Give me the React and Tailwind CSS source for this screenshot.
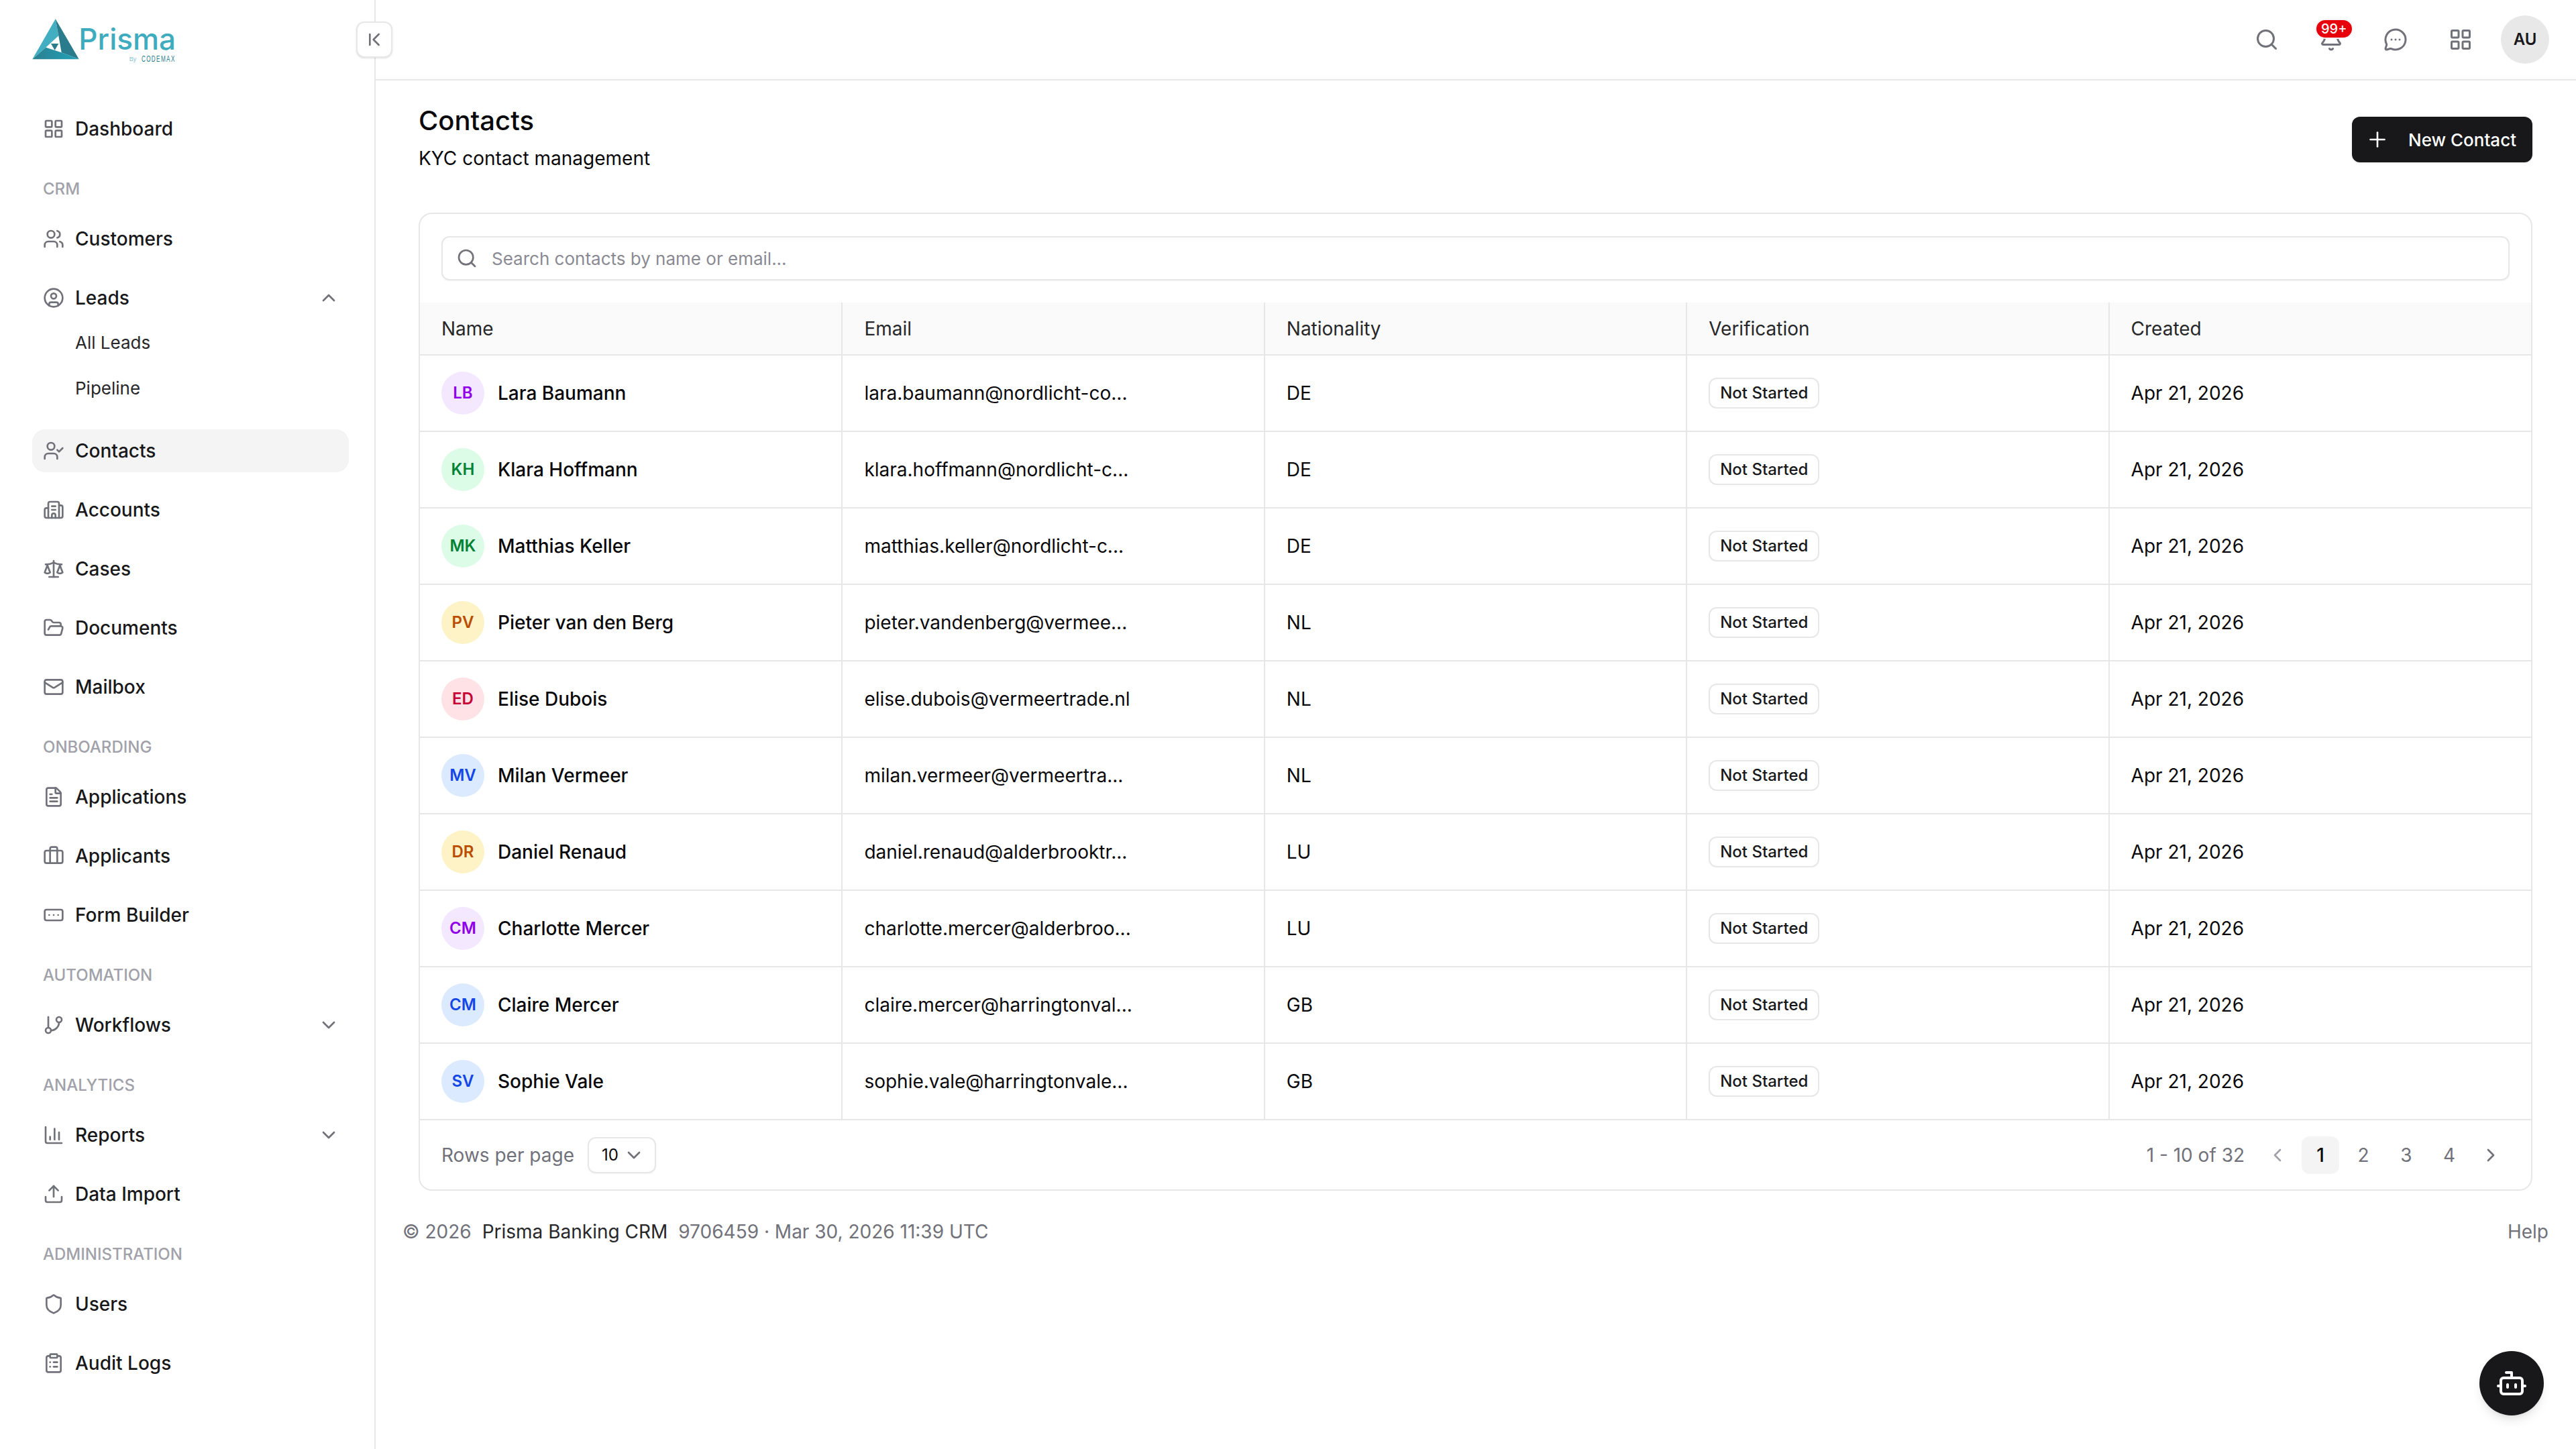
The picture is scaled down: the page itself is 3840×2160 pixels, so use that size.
import {
  Bell, Bot, Briefcase, Building2, ChartColumn, ChevronDown, ChevronFirst, ChevronLeft, ChevronRight, ChevronUp,
  CircleUser, ClipboardList, FileText, FolderOpen, GitBranch, LayoutGrid, Mail, MessageCircleMore, Plus,
  RectangleEllipsis, Scale, Search, Shield, Upload, UserCheck, Users,
} from 'lucide-react';

const contacts = [
  { initials: 'LB', name: 'Lara Baumann', email: 'lara.baumann@nordlicht-co...', nat: 'DE', tone: 'bg-[#f3e8ff] text-[#9000e8]' },
  { initials: 'KH', name: 'Klara Hoffmann', email: 'klara.hoffmann@nordlicht-c...', nat: 'DE', tone: 'bg-[#dcfce7] text-[#008236]' },
  { initials: 'MK', name: 'Matthias Keller', email: 'matthias.keller@nordlicht-c...', nat: 'DE', tone: 'bg-[#dcfce7] text-[#008236]' },
  { initials: 'PV', name: 'Pieter van den Berg', email: 'pieter.vandenberg@vermee...', nat: 'NL', tone: 'bg-[#fef3c6] text-[#bb4d00]' },
  { initials: 'ED', name: 'Elise Dubois', email: 'elise.dubois@vermeertrade.nl', nat: 'NL', tone: 'bg-[#ffe2e5] text-[#c70036]' },
  { initials: 'MV', name: 'Milan Vermeer', email: 'milan.vermeer@vermeertra...', nat: 'NL', tone: 'bg-[#dbeafe] text-[#1447e6]' },
  { initials: 'DR', name: 'Daniel Renaud', email: 'daniel.renaud@alderbrooktr...', nat: 'LU', tone: 'bg-[#fef3c6] text-[#bb4d00]' },
  { initials: 'CM', name: 'Charlotte Mercer', email: 'charlotte.mercer@alderbroo...', nat: 'LU', tone: 'bg-[#f3e8ff] text-[#9000e8]' },
  { initials: 'CM', name: 'Claire Mercer', email: 'claire.mercer@harringtonval...', nat: 'GB', tone: 'bg-[#dbeafe] text-[#1447e6]' },
  { initials: 'SV', name: 'Sophie Vale', email: 'sophie.vale@harringtonvale...', nat: 'GB', tone: 'bg-[#dbeafe] text-[#1447e6]' },
];

const columns = ['Name', 'Email', 'Nationality', 'Verification', 'Created'];

function NavItem({ icon: Icon, label, active, chevron: Chevron }) {
  return (
    <div className={`flex h-[64px] items-center gap-[16px] rounded-[19px] px-[16px] text-[28px] font-medium text-[#18181b] ${active ? 'bg-[#f4f4f5]' : ''}`}>
      <Icon className="size-[32px] shrink-0 text-[#71717a]" strokeWidth={2} />
      <span className="flex-1">{label}</span>
      {Chevron && <Chevron className="mr-[-2px] size-[32px] text-[#71717a]" strokeWidth={2} />}
    </div>
  );
}

function SectionLabel({ children }) {
  return <div className="mb-[1px] mt-[17px] flex h-[34px] items-center px-[16px] text-[24px] font-medium text-[#a1a1aa]">{children}</div>;
}

function Logo() {
  return (
    <div className="flex items-start">
      <svg viewBox="0 0 70 61" className="h-[61px] w-[70px]">
        <defs>
          <linearGradient id="logoBase" x1="0" y1="0" x2="1" y2="0">
            <stop offset="0" stopColor="#2a7f90" />
            <stop offset="1" stopColor="#22a3b8" />
          </linearGradient>
        </defs>
        <path d="M34.7 0.3 L0.3 60.3 L20.3 42.7 L39.3 25.3 Z" fill="#43aec1" />
        <path d="M34.7 0.3 L39.3 25.3 L43.7 50.3 L69.7 60.3 Z" fill="#2a7c8c" />
        <path d="M0.3 60.3 L69.7 60.3 L43.7 50.3 L20.3 42.7 Z" fill="url(#logoBase)" />
        <path d="M28 37 L39.3 37 L33.7 47 Z" fill="#2a7c8c" />
      </svg>
      <div className="ml-[9px] flex w-[135px] flex-col items-end">
        <span className="mt-[7px] text-[44px] font-medium leading-[46px] text-[#3fabbe]">Prisma</span>
        <span className="flex items-end whitespace-nowrap font-['Liberation_Sans',sans-serif] leading-[14px] text-[#2a7c8c]">
          <span className="mr-[-16px] text-[9px] text-[#7fc3d0]">By</span>
          <span className="origin-right scale-x-[0.68] text-[12px] tracking-[2px]">CODEMAX</span>
        </span>
      </div>
    </div>
  );
}

function Sidebar() {
  return (
    <aside className="relative w-[560px] shrink-0 border-r-2 border-[#e7e7e7] pl-[48px] pr-[38px]">
      <div className="flex h-[120px] items-start pt-[28px]">
        <Logo />
      </div>
      <button className="absolute right-[-27px] top-[32px] flex size-[54px] items-center justify-center rounded-[12px] border-2 border-[#e7e7e7] bg-white shadow-sm">
        <ChevronFirst className="size-[32px] text-[#71717a]" strokeWidth={2} />
      </button>
      <nav className="flex flex-col gap-[24px] pt-[40px]">
        <NavItem icon={LayoutGrid} label="Dashboard" />
        <SectionLabel>CRM</SectionLabel>
        <NavItem icon={Users} label="Customers" />
        <div>
          <NavItem icon={CircleUser} label="Leads" chevron={ChevronUp} />
          <div className="mb-[4px] pl-[64px] text-[26px] text-[#27272a]">
            <div className="flex h-[68px] items-center">All Leads</div>
            <div className="flex h-[68px] items-center">Pipeline</div>
          </div>
        </div>
        <NavItem icon={UserCheck} label="Contacts" active />
        <NavItem icon={Building2} label="Accounts" />
        <NavItem icon={Scale} label="Cases" />
        <NavItem icon={FolderOpen} label="Documents" />
        <NavItem icon={Mail} label="Mailbox" />
        <SectionLabel>ONBOARDING</SectionLabel>
        <NavItem icon={FileText} label="Applications" />
        <NavItem icon={Briefcase} label="Applicants" />
        <NavItem icon={RectangleEllipsis} label="Form Builder" />
        <SectionLabel>AUTOMATION</SectionLabel>
        <NavItem icon={GitBranch} label="Workflows" chevron={ChevronDown} />
        <SectionLabel>ANALYTICS</SectionLabel>
        <NavItem icon={ChartColumn} label="Reports" chevron={ChevronDown} />
        <NavItem icon={Upload} label="Data Import" />
        <SectionLabel>ADMINISTRATION</SectionLabel>
        <NavItem icon={Shield} label="Users" />
        <NavItem icon={ClipboardList} label="Audit Logs" />
      </nav>
    </aside>
  );
}

function Header() {
  return (
    <header className="flex h-[120px] items-center justify-end gap-[60px] border-b-2 border-[#e7e7e7] pr-[40px]">
      <Search className="size-[36px] text-[#71717a]" strokeWidth={2} />
      <div className="relative">
        <Bell className="size-[36px] text-[#71717a]" strokeWidth={2} />
        <span className="absolute left-[-6px] top-[-13px] rounded-full border-2 border-[#f4f4f5] bg-[#e7000b] px-[7px] text-[20px] font-medium leading-[26px] text-white">99+</span>
      </div>
      <MessageCircleMore className="size-[36px] text-[#71717a]" strokeWidth={2} />
      <LayoutGrid className="ml-[1px] size-[36px] text-[#71717a]" strokeWidth={2} />
      <div className="ml-[-18px] flex size-[72px] items-center justify-center rounded-full bg-[#e8e8e8] text-[24px] font-semibold text-[#18181b]">AU</div>
    </header>
  );
}

function ContactsTable() {
  return (
    <table className="w-full table-fixed border-collapse text-[28px]">
      <thead>
        <tr className="h-[78px] border-b-2 border-[#e7e7e7] bg-[#fafafa] text-left">
          {columns.map((c, i) => (
            <th key={c} className={`pl-[32px] font-normal text-[#27272a] ${i < 4 ? 'border-r-2 border-[#e7e7e7]' : ''}`}>{c}</th>
          ))}
        </tr>
      </thead>
      <tbody>
        {contacts.map((c) => (
          <tr key={c.email} className="h-[114px] border-b-2 border-[#e7e7e7] text-[#09090b]">
            <td className="border-r-2 border-[#e7e7e7] pl-[32px]">
              <div className="flex items-center gap-[20px]">
                <span className={`flex size-[64px] items-center justify-center rounded-full text-[24px] font-semibold ${c.tone}`}>{c.initials}</span>
                <span className="font-medium">{c.name}</span>
              </div>
            </td>
            <td className="border-r-2 border-[#e7e7e7] pl-[32px]">{c.email}</td>
            <td className="border-r-2 border-[#e7e7e7] pl-[32px]">{c.nat}</td>
            <td className="border-r-2 border-[#e7e7e7] pl-[32px]">
              <div className="flex">
                <span className="flex h-[46px] items-center rounded-[12px] border-2 border-[#e7e7e7] px-[15px] text-[24px] font-medium text-[#18181b]">Not Started</span>
              </div>
            </td>
            <td className="pl-[32px]">Apr 21, 2026</td>
          </tr>
        ))}
      </tbody>
    </table>
  );
}

function Pagination() {
  return (
    <div className="flex h-[103px] items-center justify-between pl-[32px] pr-[44px] text-[28px] text-[#71717a]">
      <div className="flex items-center gap-[20px]">
        <span>Rows per page</span>
        <span className="flex h-[54px] w-[102px] items-center gap-[7px] rounded-[12px] border-2 border-[#e7e7e7] pl-[19px] text-[24px] text-[#09090b] shadow-xs">
          10 <ChevronDown className="size-[32px] text-[#71717a]" strokeWidth={2} />
        </span>
      </div>
      <div className="flex items-center">
        <span className="mr-[33px]">1 - 10 of 32</span>
        <ChevronLeft className="mr-[20px] size-[32px] text-[#a1a1aa]" strokeWidth={2} />
        <span className="mr-[4px] flex size-[56px] items-center justify-center rounded-[12px] bg-[#f4f4f5] font-medium text-[#09090b]">1</span>
        <span className="flex h-[56px] w-[64px] items-center justify-center">2</span>
        <span className="flex h-[56px] w-[64px] items-center justify-center">3</span>
        <span className="flex h-[56px] w-[64px] items-center justify-center">4</span>
        <ChevronRight className="ml-[14px] size-[32px] text-[#71717a]" strokeWidth={2} />
      </div>
    </div>
  );
}

export default function App() {
  return (
    <div className="flex h-[2160px] w-[3840px] overflow-hidden bg-white font-['Inter',sans-serif] text-[#09090b]">
      <Sidebar />
      <div className="relative flex min-w-0 flex-1 flex-col">
        <Header />
        <main className="flex flex-1 flex-col pl-[64px] pr-[65px]">
          <div className="flex items-start justify-between pt-[36px]">
            <div>
              <h1 className="text-[40px] font-medium leading-[48px]">Contacts</h1>
              <p className="mt-[12px] text-[28px] leading-[40px]">KYC contact management</p>
            </div>
            <button className="mt-[18px] flex h-[68px] items-center gap-[28px] rounded-[12px] bg-[#18181b] pl-[20px] pr-[24px] text-[26px] font-medium text-white shadow-sm">
              <Plus className="size-[36px]" strokeWidth={1.75} /> New Contact
            </button>
          </div>
          <section className="mt-[61px] rounded-[20px] border-2 border-[#e7e7e7]">
            <div className="px-[32px] py-[33px]">
              <div className="flex h-[66px] items-center gap-[21px] rounded-[12px] border-2 border-[#e7e7e7] px-[20px] text-[26px] text-[#8a8a93] shadow-xs">
                <Search className="size-[32px] text-[#71717a]" strokeWidth={2} />
                Search contacts by name or email...
              </div>
            </div>
            <ContactsTable />
            <Pagination />
          </section>
          <footer className="ml-[-24px] mr-[-24px] mt-[40px] flex items-center justify-between text-[28px] text-[#71717a]">
            <div className="flex gap-[16px]">
              <span>© 2026</span>
              <span className="text-[#27272a]">Prisma Banking CRM</span>
              <span>9706459 · Mar 30, 2026 11:39 UTC</span>
            </div>
            <span>Help</span>
          </footer>
        </main>
        <button className="absolute bottom-[50px] right-[48px] flex size-[96px] items-center justify-center rounded-full bg-[#18181b] shadow-lg">
          <Bot className="size-[48px] text-white" strokeWidth={2} />
        </button>
      </div>
    </div>
  );
}
